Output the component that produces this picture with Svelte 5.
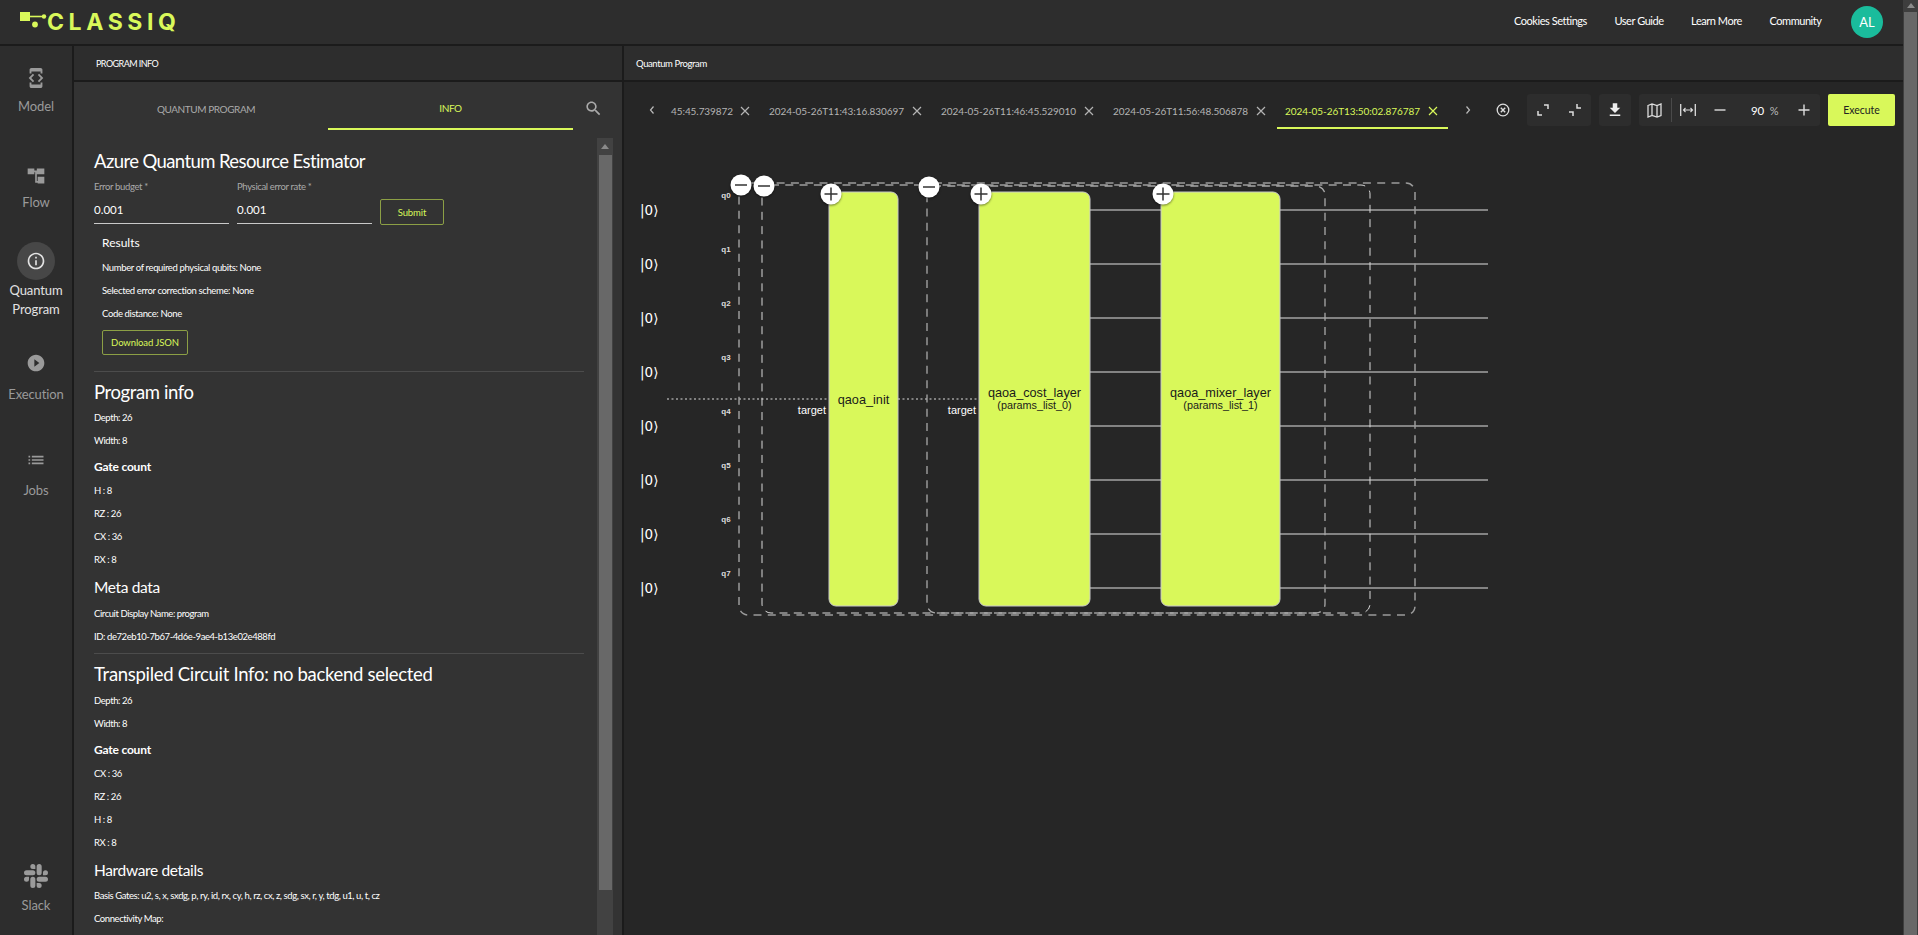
<script>
  // Sidebar entries, icons are 24x24 material style paths
  const NAV = [
    { label: ['Model'], cls: 'model', size: 22, d: 'M7 5h10v2h2V3c0-1.1-.9-1.99-2-1.99L7 1c-1.1 0-2 .9-2 2v4h2V5zm8.41 11.59L20 12l-4.59-4.59L14 8.83 17.17 12 14 15.17l1.41 1.42zM10 15.17L6.83 12 10 8.83 8.59 7.41 4 12l4.59 4.59L10 15.17zM17 19H7v-2H5v4c0 1.1.9 2 2 2h10c1.1 0 2-.9 2-2v-4h-2v2z' },
    { label: ['Flow'], cls: 'flow', size: 20, d: 'M2 3h8v7H2zM13 3h9v7h-9zM14 13h8v8h-8zM10 5.5h3v2h-3zM11 7h2v11h1v2h-3z' },
    { label: ['Quantum', 'Program'], cls: 'active', size: 20, d: 'M11 7h2v2h-2zm0 4h2v6h-2zm1-9C6.48 2 2 6.48 2 12s4.48 10 10 10 10-4.48 10-10S17.52 2 12 2zm0 18c-4.41 0-8-3.59-8-8s3.59-8 8-8 8 3.59 8 8-3.59 8-8 8z' },
    { label: ['Execution'], cls: 'exec', size: 20, d: 'M12 2C6.48 2 2 6.48 2 12s4.48 10 10 10 10-4.48 10-10S17.52 2 12 2zm-2 14.5v-9l6 4.5-6 4.5z' },
    { label: ['Jobs'], cls: 'jobs', size: 20, d: 'M3 13h2v-2H3v2zm0 4h2v-2H3v2zm0-8h2V7H3v2zm4 4h14v-2H7v2zm0 4h14v-2H7v2zM7 7v2h14V7H7z' },
  ];
  const SLACK = 'M5.042 15.165a2.528 2.528 0 0 1-2.52 2.523A2.528 2.528 0 0 1 0 15.165a2.527 2.527 0 0 1 2.522-2.52h2.52v2.52zM6.313 15.165a2.527 2.527 0 0 1 2.521-2.52 2.527 2.527 0 0 1 2.521 2.52v6.313A2.528 2.528 0 0 1 8.834 24a2.528 2.528 0 0 1-2.521-2.522v-6.313zM8.834 5.042a2.528 2.528 0 0 1-2.521-2.52A2.528 2.528 0 0 1 8.834 0a2.528 2.528 0 0 1 2.521 2.522v2.52H8.834zM8.834 6.313a2.528 2.528 0 0 1 2.521 2.521 2.528 2.528 0 0 1-2.521 2.521H2.522A2.528 2.528 0 0 1 0 8.834a2.528 2.528 0 0 1 2.522-2.521h6.312zM18.956 8.834a2.528 2.528 0 0 1 2.522-2.521A2.528 2.528 0 0 1 24 8.834a2.528 2.528 0 0 1-2.522 2.521h-2.522V8.834zM17.688 8.834a2.528 2.528 0 0 1-2.523 2.521 2.527 2.527 0 0 1-2.52-2.521V2.522A2.527 2.527 0 0 1 15.165 0a2.528 2.528 0 0 1 2.523 2.522v6.312zM15.165 18.956a2.528 2.528 0 0 1 2.523 2.522A2.528 2.528 0 0 1 15.165 24a2.527 2.527 0 0 1-2.52-2.522v-2.522h2.52zM15.165 17.688a2.527 2.527 0 0 1-2.52-2.523 2.526 2.526 0 0 1 2.52-2.52h6.313A2.527 2.527 0 0 1 24 15.165a2.528 2.528 0 0 1-2.522 2.523h-6.313z';

  const LINKS = ['Cookies Settings', 'User Guide', 'Learn More', 'Community'];

  const TABS = [
    { text: '45:45.739872', w: 62 },
    { text: '2024-05-26T11:43:16.830697', w: 136 },
    { text: '2024-05-26T11:46:45.529010', w: 136 },
    { text: '2024-05-26T11:56:48.506878', w: 136 },
    { text: '2024-05-26T13:50:02.876787', w: 136, active: true },
  ];

  // Circuit, drawn in page coordinates (viewBox starts at the canvas corner)
  const WIRES = [210, 264, 318, 372, 426, 480, 534, 588];
  const BLOCKS = [
    { x: 829, w: 69, name: 'qaoa_init' },
    { x: 979, w: 111, name: 'qaoa_cost_layer', sub: '(params_list_0)' },
    { x: 1161, w: 119, name: 'qaoa_mixer_layer', sub: '(params_list_1)' },
  ];
  const MINUS = [[741, 185], [764, 186], [929, 187]];
  const PLUS = [[831, 194], [981, 194], [1163, 194]];
</script>

<div class="page">
  <div class="main">
    <header class="topbar">
      <div class="logo">
        <svg width="28" height="20" viewBox="0 0 28 20" aria-hidden="true">
          <rect x="0" y="1" width="10" height="9" fill="#d9f85a" />
          <path d="M10 5.5h14" stroke="#d9f85a" stroke-width="1.6" />
          <circle cx="24" cy="5.5" r="2.2" fill="#d9f85a" />
          <circle cx="15" cy="13.5" r="2.9" fill="#d9f85a" />
        </svg>
        <span class="wordmark">CLASSIQ</span>
      </div>
      <nav class="links">
        {#each LINKS as link}
          <span class="link">{link}</span>
        {/each}
        <span class="avatar">AL</span>
      </nav>
    </header>

    <div class="body">
      <aside class="sidenav">
        {#each NAV as item}
          <div class="navitem {item.cls}">
            <span class="navicon">
              <svg width={item.size} height={item.size} viewBox="0 0 24 24"><path d={item.d} fill="currentColor" /></svg>
            </span>
            {#each item.label as part}
              <span class="navlabel">{part}</span>
            {/each}
          </div>
        {/each}
        <div class="navitem slack">
          <span class="navicon">
            <svg width="24" height="24" viewBox="0 0 24 24"><path d={SLACK} fill="currentColor" /></svg>
          </span>
          <span class="navlabel">Slack</span>
        </div>
      </aside>

      <section class="infopanel">
        <div class="panelbar"><span class="panelhead left">PROGRAM INFO</span></div>
        <div class="infobody">
          <div class="tabs">
            <span class="tab">QUANTUM PROGRAM</span>
            <span class="tab on">INFO</span>
            <svg class="search" width="19" height="19" viewBox="0 0 24 24">
              <path fill="#aaa" d="M15.5 14h-.79l-.28-.27C15.41 12.59 16 11.11 16 9.5 16 5.91 13.09 3 9.5 3S3 5.91 3 9.5 5.91 16 9.5 16c1.61 0 3.09-.59 4.23-1.57l.27.28v.79l5 4.99L20.49 19l-4.99-5zm-6 0C7.01 14 5 11.99 5 9.5S7.01 5 9.5 5 14 7.01 14 9.5 11.99 14 9.5 14z" />
            </svg>
          </div>
          <div class="scrollrow">
            <div class="content">
              <h2 class="azure">Azure Quantum Resource Estimator</h2>
              <div class="form">
                <label class="field">
                  <span class="fieldlabel">Error budget *</span>
                  <span class="fieldvalue">0.001</span>
                </label>
                <label class="field">
                  <span class="fieldlabel">Physical error rate *</span>
                  <span class="fieldvalue">0.001</span>
                </label>
                <button class="outline submit">Submit</button>
              </div>
              <div class="results">
                <div class="resulttitle">Results</div>
                <p class="first">Number of required physical qubits: None</p>
                <p>Selected error correction scheme: None</p>
                <p>Code distance: None</p>
                <button class="outline download">Download JSON</button>
              </div>
              <hr class="rule1" />
              <h2 class="pinfo">Program info</h2>
              <p>Depth: 26</p>
              <p>Width: 8</p>
              <h4>Gate count</h4>
              <p>H : 8</p>
              <p>RZ : 26</p>
              <p>CX : 36</p>
              <p>RX : 8</p>
              <h3 class="meta">Meta data</h3>
              <p>Circuit Display Name: program</p>
              <p>ID: de72eb10-7b67-4d6e-9ae4-b13e02e488fd</p>
              <hr class="rule2" />
              <h2 class="trans">Transpiled Circuit Info: no backend selected</h2>
              <p>Depth: 26</p>
              <p>Width: 8</p>
              <h4>Gate count</h4>
              <p>CX : 36</p>
              <p>RZ : 26</p>
              <p>H : 8</p>
              <p>RX : 8</p>
              <h3 class="hw">Hardware details</h3>
              <p>Basis Gates: u2, s, x, sxdg, p, ry, id, rx, cy, h, rz, cx, z, sdg, sx, r, y, tdg, u1, u, t, cz</p>
              <p>Connectivity Map:</p>
            </div>
            <div class="track">
              <span class="arrow"></span>
              <div class="thumb"></div>
            </div>
          </div>
        </div>
      </section>

      <section class="programpanel">
        <div class="panelbar"><span class="panelhead right">Quantum Program</span></div>
        <div class="canvas">
          <div class="tabstrip">
            <svg class="chev" width="8" height="10" viewBox="0 0 8 10"><path d="M5.5 1.5 2.5 5l3 3.5" fill="none" stroke="#bbb" stroke-width="1.2" /></svg>
            {#each TABS as tab}
              <div class="ptab" class:on={tab.active}>
                <span class="ptabtext" style="width:{tab.w}px">{tab.text}</span>
                <svg width="10" height="10" viewBox="0 0 10 10"><path d="M1 1l8 8M9 1l-8 8" stroke="currentColor" stroke-width="1.2" /></svg>
              </div>
            {/each}
            <svg class="chev next" width="8" height="10" viewBox="0 0 8 10"><path d="M2.5 1.5 5.5 5l-3 3.5" fill="none" stroke="#bbb" stroke-width="1.2" /></svg>
            <svg class="stop" width="14" height="14" viewBox="0 0 14 14">
              <circle cx="7" cy="7" r="5.8" fill="none" stroke="#ddd" stroke-width="1.3" />
              <path d="M4.8 4.8l4.4 4.4M9.2 4.8l-4.4 4.4" stroke="#ddd" stroke-width="1.4" />
            </svg>
            <div class="tools two">
              <span class="tool"><svg width="12" height="12" viewBox="0 0 12 12"><path d="M1 7v4h4M7 1h4v4" fill="none" stroke="#ddd" stroke-width="1.5" /></svg></span>
              <span class="tool"><svg width="12" height="12" viewBox="0 0 12 12"><path d="M0 8h4v4M8 0v4h4" fill="none" stroke="#ddd" stroke-width="1.5" /></svg></span>
            </div>
            <div class="tools one">
              <span class="tool"><svg width="18" height="18" viewBox="0 0 24 24"><path fill="#eee" d="M19 9h-4V3H9v6H5l7 7 7-7zM5 18v2h14v-2H5z" /></svg></span>
            </div>
            <div class="tools zoom">
              <span class="tool"><svg width="15" height="15" viewBox="0 0 15 15"><path d="M1 2.5 5 1l5 1.5L14 1v11.5L10 14l-5-1.5L1 14zM5 1v12M10 2.5V14" fill="none" stroke="#ddd" stroke-width="1.3" /></svg></span>
              <span class="sep"></span>
              <span class="tool"><svg width="16" height="12" viewBox="0 0 16 12"><path d="M.7 0v12M15.3 0v12" stroke="#ddd" stroke-width="1.3" /><path d="M3.5 6h9M5.5 4l-2 2 2 2M10.5 4l2 2-2 2" fill="none" stroke="#ddd" stroke-width="1.1" /></svg></span>
              <span class="tool"><svg width="12" height="12" viewBox="0 0 12 12"><path d="M.5 6h11" stroke="#ddd" stroke-width="1.4" /></svg></span>
              <span class="zoomval">90</span>
              <span class="pct">%</span>
              <span class="tool"><svg width="12" height="12" viewBox="0 0 12 12"><path d="M.5 6h11M6 .5v11" stroke="#ddd" stroke-width="1.4" /></svg></span>
            </div>
            <button class="execute">Execute</button>
          </div>

          <svg class="circuit" width="1280" height="803" viewBox="624 132 1280 803">
            {#each WIRES as y, i}
              <text class="ket" x="640" y={y + 5}>|0⟩</text>
              <text class="qlabel" x="726" y={y - 12} text-anchor="middle">q{i}</text>
              <path d="M1090 {y}H1161M1280 {y}H1488" class="wire" />
            {/each}

            <path d="M667 399H829M898 399H979" class="dots" />

            <rect x="739" y="183" width="676" height="432" rx="9" class="dash thick" />
            <rect x="762" y="185" width="608" height="428" rx="9" class="dash" />
            <rect x="927" y="186" width="398" height="427" rx="9" class="dash thick2" />

            <text class="target" x="826" y="414" text-anchor="end">target</text>
            <text class="target" x="976" y="414" text-anchor="end">target</text>

            {#each BLOCKS as b}
              <rect x={b.x} y="192" width={b.w} height="414" rx="7" class="block" />
              <text class="blockname" x={b.x + b.w / 2} y={b.sub ? 397 : 404} text-anchor="middle">{b.name}</text>
              {#if b.sub}
                <text class="blocksub" x={b.x + b.w / 2} y="409" text-anchor="middle">{b.sub}</text>
              {/if}
            {/each}

            {#each MINUS as [x, y]}
              <ellipse cx={x} cy={y} rx="10.5" ry="10.5" class="knob" />
              <path d="M{x - 6} {y}H{x + 6}" class="knobmark grey" />
            {/each}
            {#each PLUS as [x, y]}
              <circle cx={x} cy={y} r="10.5" class="knob" />
              <path d="M{x - 6.5} {y}H{x + 6.5}M{x} {y - 6.5}V{y + 6.5}" class="knobmark" />
            {/each}
          </svg>
        </div>
      </section>
    </div>
  </div>
  <div class="pagescroll">
    <span class="arrow"></span>
    <div class="pagethumb"></div>
  </div>
</div>

<style>
  :global(body) {
    margin: 0;
    background: #1b1b1b;
    overflow: hidden;
  }

  .page {
    display: flex;
    width: 1918px;
    height: 935px;
    overflow: hidden;
    font-family: Lato, "Noto Sans", sans-serif;
    color: #fff;
  }

  .main {
    width: 1903px;
    display: flex;
    flex-direction: column;
  }

  .topbar {
    height: 44px;
    flex-shrink: 0;
    background: #2d2d2d;
    display: flex;
    align-items: center;
    justify-content: space-between;
    padding: 0 20px;
  }

  .logo {
    display: flex;
    align-items: flex-start;
    height: 20px;
    margin-top: -3px;
  }

  .wordmark {
    font-family: Inter, sans-serif;
    font-weight: 700;
    font-size: 23px;
    line-height: 21px;
    letter-spacing: 4.6px;
    color: #d9f85a;
    margin-left: -1px;
    margin-top: 1px;
  }

  .links {
    display: flex;
    align-items: center;
    font-size: 11px;
    letter-spacing: -0.45px;
    gap: 27.5px;
    color: #fff;
  }

  .link { margin-bottom: 4px; }

  .avatar {
    width: 32px;
    height: 32px;
    border-radius: 50%;
    background: #1abc9c;
    display: flex;
    align-items: center;
    justify-content: center;
    font-size: 13px;
    letter-spacing: 0;
    margin-left: 2px;
  }

  .body {
    flex: 1;
    min-height: 0;
    display: flex;
    gap: 2px;
    margin-top: 2px;
  }

  .sidenav {
    width: 72px;
    flex-shrink: 0;
    background: #2d2d2d;
    display: flex;
    flex-direction: column;
    align-items: center;
    color: #9a9a9a;
  }

  .navitem {
    display: flex;
    flex-direction: column;
    align-items: center;
  }

  .navicon {
    display: flex;
    align-items: center;
    justify-content: center;
    width: 38px;
    height: 38px;
    border-radius: 50%;
  }

  .navlabel {
    font-size: 13px;
    line-height: 20px;
    letter-spacing: -0.1px;
  }

  .model { margin-top: 13px; }
  .model .navlabel { margin-top: -1px; }
  .flow { margin-top: 41px; }
  .flow .navlabel { margin-top: -3px; }
  .active { margin-top: 30px; color: #e2e2e2; }
  .active .navlabel:last-child { margin-top: -1px; }
  .exec { margin-top: 25px; }
  .exec .navlabel { margin-top: 2px; }
  .active .navicon { background: #474747; }
  .jobs { margin-top: 37px; }
  .jobs .navlabel { margin-top: 1px; }
  .slack { margin-top: auto; margin-bottom: 20px; }

  .infopanel {
    width: 548px;
    flex-shrink: 0;
    display: flex;
    flex-direction: column;
  }

  .programpanel {
    flex: 1;
    min-width: 0;
    display: flex;
    flex-direction: column;
  }

  .panelbar {
    height: 34px;
    flex-shrink: 0;
    background: #2d2d2d;
    display: flex;
    align-items: center;
    margin-bottom: 2px;
  }

  .panelhead {
    font-size: 9.5px;
    letter-spacing: -0.4px;
  }
  .panelhead.left { margin-left: 22px; font-size: 9px; letter-spacing: -0.55px; }
  .panelhead.right { margin-left: 12px; }

  .infobody {
    flex: 1;
    min-height: 0;
    background: #333;
    display: flex;
    flex-direction: column;
  }

  .tabs {
    height: 48px;
    flex-shrink: 0;
    display: flex;
    align-items: stretch;
    padding-left: 10px;
    position: relative;
  }

  .tab {
    width: 244px;
    display: flex;
    align-items: center;
    justify-content: center;
    font-size: 10px;
    letter-spacing: -0.42px;
    color: #aaa;
    padding-top: 5px;
    box-sizing: border-box;
    height: 48px;
  }

  .tab.on {
    width: 245px;
    color: #d9f85a;
    border-bottom: 2px solid #d9f85a;
  }

  .search {
    margin: 17px 0 0 11px;
  }

  .scrollrow {
    flex: 1;
    min-height: 0;
    display: flex;
    margin-top: 8px;
    padding-right: 9px;
  }

  .content {
    flex: 1;
    min-width: 0;
    padding: 0 13px 0 20px;
    overflow: hidden;
  }

  h2, h3, h4, p { margin: 0; font-weight: 400; }

  h2 {
    font-size: 18.5px;
    line-height: 26px;
    letter-spacing: -0.4px;
  }

  h3 {
    font-size: 15.5px;
    line-height: 22px;
    letter-spacing: -0.35px;
  }

  h4 {
    font-size: 12px;
    font-weight: 700;
    line-height: 23px;
    letter-spacing: -0.2px;
    margin-top: 3px;
    margin-bottom: 1px;
  }

  p {
    font-size: 9.5px;
    line-height: 23px;
    height: 23px;
    letter-spacing: -0.42px;
    white-space: nowrap;
  }

  .azure { margin-top: 10px; letter-spacing: -0.6px; }

  .form {
    display: flex;
    gap: 8px;
    margin-top: 2px;
    align-items: flex-end;
  }

  .field {
    width: 135px;
    display: flex;
    flex-direction: column;
    border-bottom: 1px solid #c9c9c9;
  }

  .fieldlabel {
    font-size: 9.5px;
    line-height: 21px;
    letter-spacing: -0.35px;
    color: #aaa;
  }

  .fieldvalue {
    font-size: 11.5px;
    line-height: 26px;
  }

  .outline {
    font-family: inherit;
    font-size: 9.5px;
    background: transparent;
    color: #d9f85a;
    border: 1px solid #8c9f45;
    border-radius: 2px;
    padding: 0;
    letter-spacing: -0.1px;
  }

  .submit { width: 64px; height: 26px; margin-bottom: -1px; }
  .download { width: 86px; height: 25px; margin-top: 5px; display: block; }

  .results { padding-left: 8px; margin-top: 9px; }
  .results p { letter-spacing: -0.36px; }

  .resulttitle {
    font-size: 12px;
    line-height: 20px;
  }

  .first { margin-top: 3px; }

  hr {
    border: none;
    height: 1px;
    background: #4c4c4c;
    margin: 0;
  }

  .rule1 { margin-top: 16px; }
  .pinfo { margin-top: 7px; margin-bottom: 1px; }
  .meta { margin-top: 5px; margin-bottom: 4px; }
  .rule2 { margin-top: 5px; }
  .trans { margin-top: 7px; margin-bottom: 2px; letter-spacing: -0.3px; }
  .hw { margin-top: 5px; margin-bottom: 3px; }

  .track {
    width: 16px;
    flex-shrink: 0;
    background: #424242;
    display: flex;
    flex-direction: column;
    align-items: center;
    position: relative;
  }

  .arrow {
    width: 0;
    height: 0;
    border-left: 4px solid transparent;
    border-right: 4px solid transparent;
    border-bottom: 5px solid #8a8a8a;
    margin-top: 6px;
    flex-shrink: 0;
  }

  .thumb {
    width: 13px;
    height: 735px;
    background: #686868;
    margin-top: 6px;
  }

  .canvas {
    flex: 1;
    min-height: 0;
    background: #262626;
    display: flex;
    flex-direction: column;
  }

  .tabstrip {
    height: 50px;
    flex-shrink: 0;
    display: flex;
    align-items: flex-start;
    padding: 12px 0 0 24px;
    box-sizing: border-box;
  }

  .chev { margin-top: 11px; flex-shrink: 0; }
  .chev.next { margin-left: 13px; }

  .ptab {
    height: 35px;
    display: flex;
    align-items: flex-start;
    gap: 7px;
    padding: 9px 8px 0;
    margin-right: 3px;
    box-sizing: border-box;
    font-size: 10px;
    letter-spacing: -0.07px;
    color: #b4b4b4;
    white-space: nowrap;
  }

  .ptab:first-of-type { margin-left: 7px; margin-right: 3px; }

  .ptab svg { margin-top: 3px; flex-shrink: 0; }

  .ptab.on {
    color: #d9f85a;
    border-bottom: 2px solid #d9f85a;
    padding-right: 10px;
  }

  .ptabtext { display: inline-block; line-height: 16px; }

  .stop { margin: 9px 0 0 24px; flex-shrink: 0; }

  .tools {
    height: 32px;
    background: #2d2d2d;
    border-radius: 3px;
    display: flex;
    align-items: center;
    flex-shrink: 0;
  }

  .tool {
    width: 32px;
    height: 32px;
    display: flex;
    align-items: center;
    justify-content: center;
  }

  .tools.two { margin-left: 17px; }
  .tools.one { margin-left: 8px; }
  .tools.zoom { margin-left: 8px; width: 181px; }

  .sep {
    width: 1px;
    height: 24px;
    background: #4a4a4a;
  }

  .zoomval {
    font-size: 11.5px;
    width: 29px;
    text-align: right;
  }

  .pct {
    font-size: 11px;
    color: #bbb;
    width: 20px;
    text-align: center;
    margin-right: 4px;
  }

  .execute {
    width: 67px;
    height: 32px;
    margin-left: 8px;
    flex-shrink: 0;
    background: #d9f85a;
    border: none;
    border-radius: 2px;
    color: #222;
    font-family: inherit;
    font-size: 10.5px;
    padding: 0;
  }

  .circuit { display: block; flex-shrink: 0; }

  .ket {
    font-family: "DejaVu Sans", sans-serif;
    font-size: 13.5px;
    fill: #fff;
  }

  .qlabel {
    font-family: "Liberation Sans", sans-serif;
    font-size: 8px;
    font-weight: 700;
    fill: #ddd;
  }

  .wire { stroke: #a3a3a3; stroke-width: 1.5; fill: none; }
  .dots { stroke: #a0a0a0; stroke-width: 1.3; stroke-dasharray: 2 2.5; fill: none; }

  .dash {
    fill: none;
    stroke: #d8d8d8;
    stroke-width: 1;
    stroke-dasharray: 8 6.3;
  }
  .dash.thick { stroke: #9a9a9a; stroke-width: 1.5; }
  .dash.thick2 { stroke: #a8a8a8; stroke-width: 1.3; stroke-dashoffset: 3; }

  .target {
    font-family: "Liberation Sans", sans-serif;
    font-size: 11px;
    fill: #fff;
  }

  .block {
    fill: #d9f85a;
    stroke: #c8c8c8;
    stroke-width: 1;
  }

  .blockname {
    font-family: "Liberation Sans", sans-serif;
    font-size: 12.7px;
    fill: #1a1a1a;
  }

  .blocksub {
    font-family: "Liberation Sans", sans-serif;
    font-size: 10.8px;
    fill: #1a1a1a;
  }

  .knob {
    fill: #fff;
    filter: drop-shadow(0 1px 1px rgba(0, 0, 0, 0.5));
  }

  .knobmark {
    fill: none;
    stroke: #333;
    stroke-width: 1.5;
  }
  .knobmark.grey { stroke: #666; stroke-width: 2; }

  .pagescroll {
    width: 15px;
    flex-shrink: 0;
    background: #3e3e3e;
    display: flex;
    flex-direction: column;
    align-items: center;
  }

  .pagescroll .arrow { margin-top: 3px; }

  .pagethumb {
    width: 13px;
    flex: 1;
    background: #686868;
    margin-top: 4px;
  }
</style>
